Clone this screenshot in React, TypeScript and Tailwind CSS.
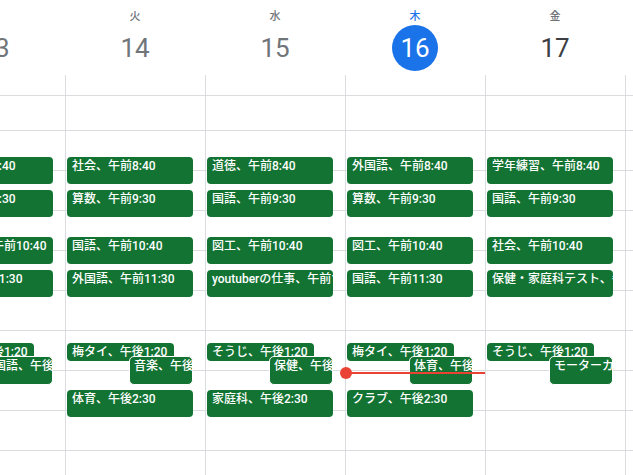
import React from "react";

type Ev = {
    label: string;
    h: number;
    m: number;
    kind?: "short" | "overlap";
};

type Day = {
    dow: string;
    date: number;
    past?: boolean;
    today?: boolean;
    hidden?: boolean;
    events: Ev[];
};

const days: Day[] = [
    {
        dow: "月",
        date: 13,
        past: true,
        events: [
            { label: "国語、午前8:40", h: 8, m: 40 },
            { label: "算数、午前9:30", h: 9, m: 30 },
            { label: "学年練習、午前10:40", h: 10, m: 40 },
            { label: "理科、午前11:30", h: 11, m: 30 },
            { label: "そうじ、午後1:20", h: 13, m: 20, kind: "short" },
            { label: "国語、午後1:40", h: 13, m: 40, kind: "overlap" },
        ],
    },
    {
        dow: "火",
        date: 14,
        past: true,
        events: [
            { label: "社会、午前8:40", h: 8, m: 40 },
            { label: "算数、午前9:30", h: 9, m: 30 },
            { label: "国語、午前10:40", h: 10, m: 40 },
            { label: "外国語、午前11:30", h: 11, m: 30 },
            { label: "梅タイ、午後1:20", h: 13, m: 20, kind: "short" },
            { label: "音楽、午後1:40", h: 13, m: 40, kind: "overlap" },
            { label: "体育、午後2:30", h: 14, m: 30 },
        ],
    },
    {
        dow: "水",
        date: 15,
        past: true,
        events: [
            { label: "道徳、午前8:40", h: 8, m: 40 },
            { label: "国語、午前9:30", h: 9, m: 30 },
            { label: "図工、午前10:40", h: 10, m: 40 },
            { label: "youtuberの仕事、午前11:30", h: 11, m: 30 },
            { label: "そうじ、午後1:20", h: 13, m: 20, kind: "short" },
            { label: "保健、午後1:40", h: 13, m: 40, kind: "overlap" },
            { label: "家庭科、午後2:30", h: 14, m: 30 },
        ],
    },
    {
        dow: "木",
        date: 16,
        today: true,
        events: [
            { label: "外国語、午前8:40", h: 8, m: 40 },
            { label: "算数、午前9:30", h: 9, m: 30 },
            { label: "図工、午前10:40", h: 10, m: 40 },
            { label: "国語、午前11:30", h: 11, m: 30 },
            { label: "梅タイ、午後1:20", h: 13, m: 20, kind: "short" },
            { label: "体育、午後1:40", h: 13, m: 40, kind: "overlap" },
            { label: "クラブ、午後2:30", h: 14, m: 30 },
        ],
    },
    {
        dow: "金",
        date: 17,
        events: [
            { label: "学年練習、午前8:40", h: 8, m: 40 },
            { label: "国語、午前9:30", h: 9, m: 30 },
            { label: "社会、午前10:40", h: 10, m: 40 },
            { label: "保健・家庭科テスト、午前11:30", h: 11, m: 30 },
            { label: "そうじ、午後1:20", h: 13, m: 20, kind: "short" },
            { label: "モーターカー、午後1:40", h: 13, m: 40, kind: "overlap" },
        ],
    },
    // saturday column only peeks in at the right edge
    { dow: "土", date: 18, hidden: true, events: [] },
];

// body starts at y=96, 8:00 line sits at y=130, 40px per hour
const topOf = (h: number, m: number) => 34 + (h - 8) * 40 + (m * 2) / 3;

const EventChip: React.FC<{ ev: Ev }> = ({ ev }) => {
    const top = topOf(ev.h, ev.m);
    if (ev.kind === "short") {
        return (
            <div
                className="absolute left-[1px] w-[107px] h-[18px] rounded-[4px] bg-[#137333] text-white overflow-hidden whitespace-nowrap pl-[5px] text-[12px] leading-[16px] font-medium pt-[1px]"
                style={{ top }}
            >
                {ev.label}
            </div>
        );
    }
    if (ev.kind === "overlap") {
        return (
            <div
                className="absolute left-[63px] w-[64px] h-[29px] rounded-[5px] border border-white bg-[#137333] text-white overflow-hidden whitespace-nowrap pl-[4px] text-[12px] leading-[16px] font-medium pt-[1px]"
                style={{ top: top - 1 }}
            >
                {ev.label}
            </div>
        );
    }
    return (
        <div
            className="absolute left-[1px] w-[126px] h-[27px] rounded-[4px] bg-[#137333] text-white overflow-hidden whitespace-nowrap pl-[5px] text-[12px] leading-[16px] font-medium pt-[1px]"
            style={{ top }}
        >
            {ev.label}
        </div>
    );
};

export default function App() {
    return (
        <div className="w-[633px] h-[475px] overflow-hidden bg-white font-['Roboto','Noto_Sans_CJK_JP',sans-serif]">
            <div className="-ml-[75px] flex flex-col">
                {/* header */}
                <div className="flex border-b border-[#dadce0]">
                    {days.map((d) => (
                        <div key={d.date} className="w-[140px] shrink-0 flex flex-col">
                            <div className="h-[75px] flex flex-col items-center pt-[9px]">
                                {!d.hidden && (
                                    <>
                                        <span
                                            className={
                                                d.today
                                                    ? "text-[11px] leading-[16px] font-medium text-[#1a73e8]"
                                                    : "text-[11px] leading-[16px] font-medium text-[#70757a]"
                                            }
                                        >
                                            {d.dow}
                                        </span>
                                        {d.today ? (
                                            <div className="w-[46px] h-[46px] rounded-full bg-[#1a73e8] text-white flex items-center justify-center text-[26px]">
                                                {d.date}
                                            </div>
                                        ) : (
                                            <div
                                                className={
                                                    d.past
                                                        ? "h-[46px] flex items-center justify-center text-[26px] text-[#70757a]"
                                                        : "h-[46px] flex items-center justify-center text-[26px] text-[#3c4043]"
                                                }
                                            >
                                                {d.date}
                                            </div>
                                        )}
                                    </>
                                )}
                            </div>
                            <div className="h-[20px] border-l border-[#dadce0]" />
                        </div>
                    ))}
                </div>

                {/* time grid */}
                <div className="flex">
                    {days.map((d) => (
                        <div
                            key={d.date}
                            className="relative w-[140px] shrink-0 h-[379px] border-l border-[#dadce0] flex flex-col"
                        >
                            <div className="h-[34px] shrink-0" />
                            {Array.from({ length: 9 }).map((_, i) => (
                                <div key={i} className="h-[40px] shrink-0 border-t border-[#dadce0]" />
                            ))}
                            {d.events.map((ev) => (
                                <EventChip key={ev.label} ev={ev} />
                            ))}
                            {d.today && (
                                <div className="absolute -left-[1px] right-0 top-[276px] h-[2px] bg-[#ea4335]">
                                    <div className="absolute -left-[5px] -top-[5px] w-[12px] h-[12px] rounded-full bg-[#ea4335]" />
                                </div>
                            )}
                        </div>
                    ))}
                </div>
            </div>
        </div>
    );
}
